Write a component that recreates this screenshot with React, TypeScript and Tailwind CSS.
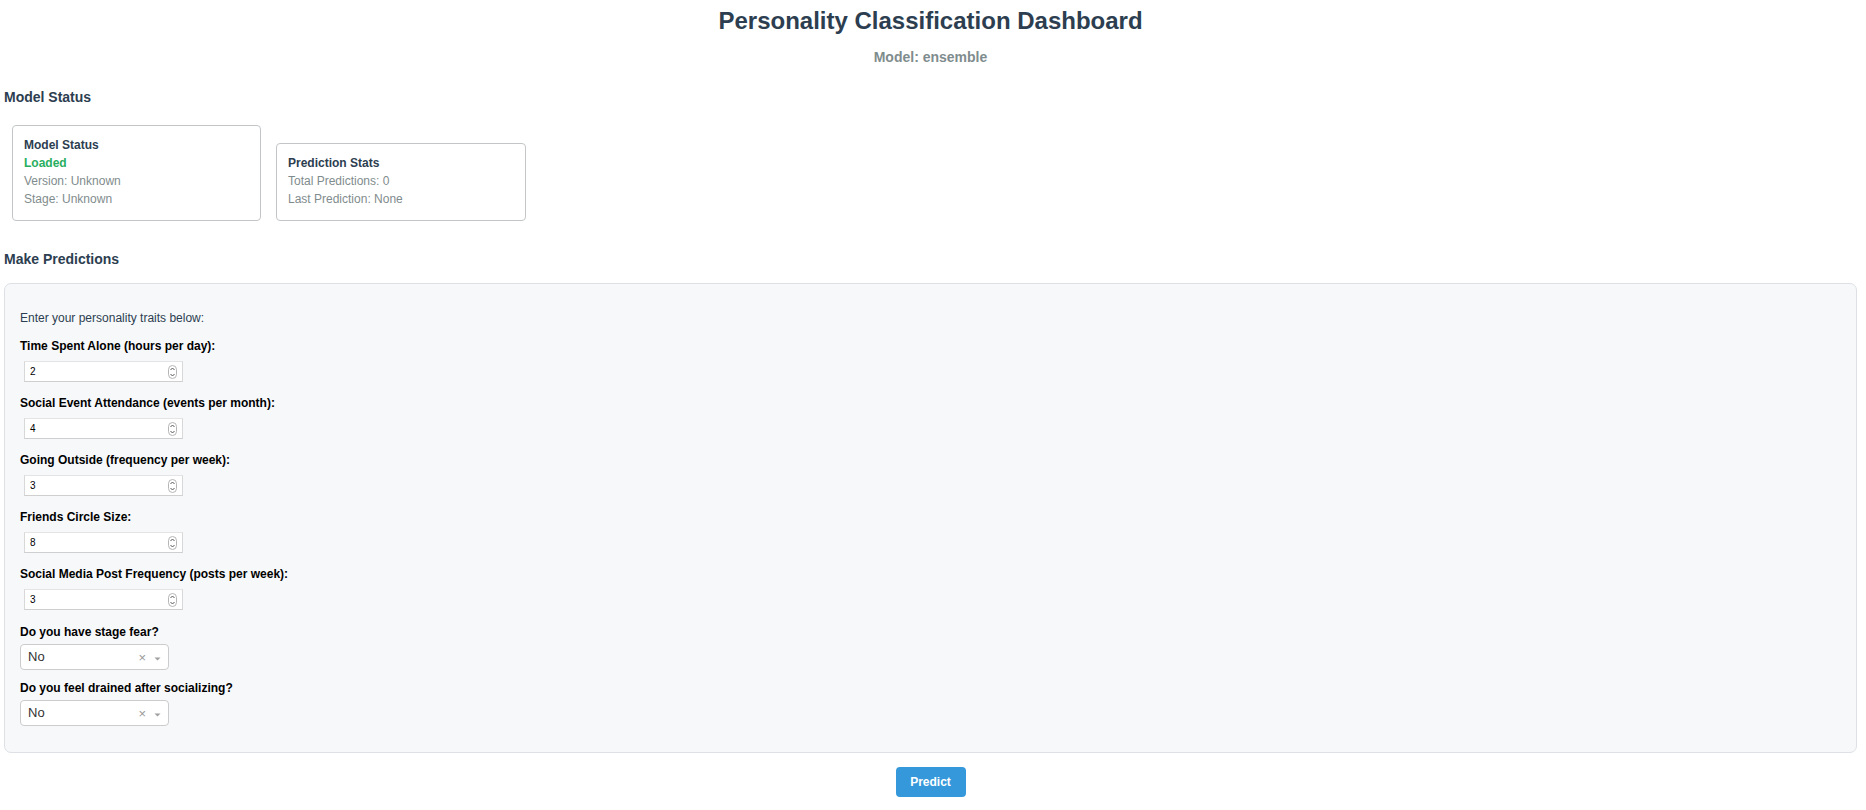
import React from "react";

const numberFields = [
  { label: "Time Spent Alone (hours per day):", value: "2" },
  { label: "Social Event Attendance (events per month):", value: "4" },
  { label: "Going Outside (frequency per week):", value: "3" },
  { label: "Friends Circle Size:", value: "8" },
  { label: "Social Media Post Frequency (posts per week):", value: "3" },
];

const selectFields = [
  { label: "Do you have stage fear?", value: "No" },
  { label: "Do you feel drained after socializing?", value: "No" },
];

function Spinner() {
  return (
    <svg width="9" height="14" viewBox="0 0 9 14" fill="none">
      <rect x="0.5" y="0.5" width="8" height="13" rx="4" stroke="#b5b5b5" />
      <path d="M2.5 5 L4.5 3 L6.5 5" stroke="#555" strokeWidth="1" />
      <path d="M2.5 9 L4.5 11 L6.5 9" stroke="#555" strokeWidth="1" />
    </svg>
  );
}

function NumberField({ label, value }: { label: string; value: string }) {
  return (
    <div className="mt-[14px] first:mt-0">
      <div className="text-[12px] font-bold leading-[14px] text-black">{label}</div>
      <div className="mt-[8px] ml-[4px] flex h-[21px] w-[159px] items-center justify-between border border-[#d8d8d8] border-t-[#e4e4e4] border-b-[#cfcfcf] bg-white pl-[5px] pr-[5px]">
        <span className="text-[10px] text-black">{value}</span>
        <Spinner />
      </div>
    </div>
  );
}

function SelectField({ label, value, first }: { label: string; value: string; first: boolean }) {
  return (
    <div className={first ? "mt-[15px]" : "mt-[11px]"}>
      <div className="text-[12px] font-bold leading-[14px] text-black">{label}</div>
      <div className="mt-[5px] flex h-[26px] w-[149px] items-center rounded-[4px] border border-[#cccccc] bg-white pl-[7px] pr-[7px]">
        <span className="flex-1 text-[13px] text-[#333]">{value}</span>
        <span className="text-[13px] leading-none text-[#999]">×</span>
        <svg className="ml-[8px] mt-[3px]" width="7" height="4" viewBox="0 0 7 4">
          <path d="M0.5 0.5 L3.5 3.5 L6.5 0.5 Z" fill="#a0a0a0" />
        </svg>
      </div>
    </div>
  );
}

export default function App() {
  return (
    <div className="min-h-screen bg-white pb-[10px] pl-[4px] pr-[9px] font-['Liberation_Sans',Arial,sans-serif]">
      {/* Header */}
      <h1 className="pt-[7px] text-center text-[24px] font-bold leading-[28px] text-[#2c3e50]">
        Personality Classification Dashboard
      </h1>
      <p className="mt-[14px] text-center text-[14px] font-bold leading-[16px] text-[#7f8c8d]">
        Model: ensemble
      </p>

      {/* Status */}
      <h3 className="mt-[24px] text-[14px] font-bold leading-[16px] text-[#2c3e50]">Model Status</h3>
      <div className="mt-[20px] ml-[8px] flex items-end gap-[15px]">
        <div className="w-[249px] rounded-[4px] border border-[#c3c6c9] pb-[12px] pl-[11px] pt-[10px] text-[12px] leading-[18px]">
          <div className="font-bold text-[#2c3e50]">Model Status</div>
          <div className="font-bold text-[#27ae60]">Loaded</div>
          <div className="text-[#7f8c8d]">Version: Unknown</div>
          <div className="text-[#7f8c8d]">Stage: Unknown</div>
        </div>
        <div className="w-[250px] rounded-[4px] border border-[#c3c6c9] pb-[12px] pl-[11px] pt-[10px] text-[12px] leading-[18px]">
          <div className="font-bold text-[#2c3e50]">Prediction Stats</div>
          <div className="text-[#7f8c8d]">Total Predictions: 0</div>
          <div className="text-[#7f8c8d]">Last Prediction: None</div>
        </div>
      </div>

      {/* Predictions */}
      <h3 className="mt-[30px] text-[14px] font-bold leading-[16px] text-[#2c3e50]">Make Predictions</h3>
      <div className="mt-[16px] rounded-[7px] border border-[#dde1e5] bg-[#f7f8fa] pb-[26px] pl-[15px] pt-[27px]">
        <p className="text-[12px] leading-[14px] text-[#2c3e50]">Enter your personality traits below:</p>
        <div className="mt-[14px]">
          {numberFields.map((f) => (
            <NumberField key={f.label} label={f.label} value={f.value} />
          ))}
        </div>
        {selectFields.map((f, i) => (
          <SelectField key={f.label} label={f.label} value={f.value} first={i === 0} />
        ))}
      </div>

      <div className="mt-[14px] flex justify-center">
        <button className="h-[30px] w-[70px] rounded-[4px] bg-[#3498db] text-[12px] font-bold text-white">
          Predict
        </button>
      </div>
    </div>
  );
}
